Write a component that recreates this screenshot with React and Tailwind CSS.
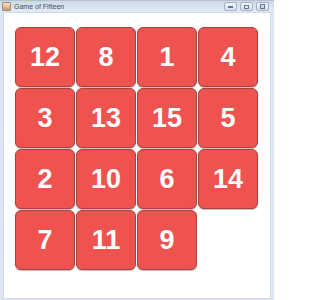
const tiles = [12, 8, 1, 4, 3, 13, 15, 5, 2, 10, 6, 14, 7, 11, 9, null];

function TitleButton({ children }) {
  return (
    <div className="w-[13px] h-[9px] rounded-[2px] border border-[#a3b2c4] bg-gradient-to-b from-[#eef3f9] to-[#d5e0ec] flex items-center justify-center">
      {children}
    </div>
  );
}

export default function App() {
  return (
    <div className="w-[274px] h-[300px] bg-[#dde7f3] flex flex-col" style={{ fontFamily: '"Liberation Sans", Arial, sans-serif' }}>
      {/* title bar */}
      <div className="h-[12px] flex items-center px-[2px] bg-gradient-to-b from-[#cfdae8] to-[#e3ebf5] border-t border-[#b3c0d0]">
        <div className="w-[9px] h-[9px] rounded-[1px] bg-gradient-to-b from-[#f4e6d0] to-[#c99a63] border border-[#9c8a76]" />
        <span className="ml-[3px] text-[7px] leading-none text-[#4a4f57]">Game of Fifteen</span>
        <div className="ml-auto flex gap-[3px] pr-[3px]">
          <TitleButton><div className="w-[5px] h-[2px] border border-[#6b7684]" /></TitleButton>
          <TitleButton><div className="w-[5px] h-[4px] border border-[#6b7684]" /></TitleButton>
          <TitleButton><div className="w-[5px] h-[5px] border border-[#6b7684] flex items-center justify-center text-[4px] leading-none text-[#6b7684]">×</div></TitleButton>
        </div>
      </div>

      {/* window body */}
      <div className="flex-1 mx-[3px] mb-[1px] bg-white border border-[#d0dbe7] pl-[11px] pt-[14px]">
        <div className="grid grid-cols-[repeat(4,60px)] grid-rows-[repeat(4,60px)] gap-[1px]">
          {tiles.map((n, i) =>
            n ? (
              <div
                key={i}
                className="rounded-[6px] border border-[#a8403c] bg-[#ef5350] shadow-[0_1px_1px_rgba(0,0,0,0.25)] flex items-center justify-center text-white font-bold text-[27px] leading-none"
              >
                {n}
              </div>
            ) : (
              <div key={i} />
            )
          )}
        </div>
      </div>
    </div>
  );
}
